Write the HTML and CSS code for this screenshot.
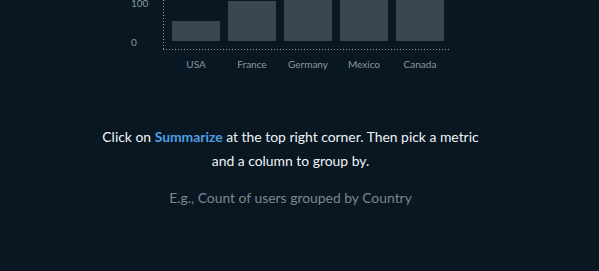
FILE: index.html
```html
<!DOCTYPE html>
<html lang="en">
  <head>
    <meta charset="utf-8">
    <meta name="viewport" content="width=device-width, initial-scale=1">
    <title>Summarize hint</title>
    <link rel="stylesheet" href="styles.css">
  </head>

  <body>
    <div class="empty-state">
      <svg class="chart" width="599" height="80" viewBox="0 0 599 80">
        <g class="axis-labels">
          <text x="131" y="7">100</text>
          <text x="131" y="46">0</text>
        </g>
        <g class="bars">
          <rect x="172" y="21" width="48" height="20"></rect>
          <rect x="228" y="1" width="48" height="40"></rect>
          <rect x="284" y="-10" width="48" height="51"></rect>
          <rect x="340" y="-10" width="48" height="51"></rect>
          <rect x="396" y="-10" width="48" height="51"></rect>
        </g>
        <g class="axis">
          <line x1="163.5" y1="0" x2="163.5" y2="49"></line>
          <line x1="163" y1="49.5" x2="449" y2="49.5"></line>
        </g>
        <g class="x-labels">
          <text x="196" y="68">USA</text>
          <text x="252" y="68">France</text>
          <text x="308" y="68">Germany</text>
          <text x="364" y="68">Mexico</text>
          <text x="420" y="68">Canada</text>
        </g>
      </svg>

      <div class="copy">
        <p class="hint">Click on <strong class="link">Summarize</strong> at the top right corner. Then pick a metric and a column to group by.</p>
        <p class="example">E.g., Count of users grouped by Country</p>
      </div>
    </div>
  </body>
</html>
```

FILE: styles.css
```css
html, body {
  margin: 0;
  background: #081722;
}
body {
  font-family: Lato, "Noto Sans", sans-serif;
  color: #ffffff;
}
.empty-state {
  display: flex;
  flex-direction: column;
  align-items: center;
}
.chart {
  display: block;
}
.chart .bars rect {
  fill: #3b464e;
}
.chart .axis line {
  stroke: #8d979e;
  stroke-width: 1;
  stroke-dasharray: 1 2;
}
.chart text {
  font-family: Lato, "Noto Sans", sans-serif;
  font-size: 10px;
  fill: #8d979e;
}
.chart .x-labels text {
  text-anchor: middle;
}
.copy {
  display: flex;
  flex-direction: column;
  align-items: center;
  margin-right: 18px;
}
.hint {
  width: 390px;
  margin: 45px 0 0;
  font-size: 13.9px;
  line-height: 24px;
  text-align: center;
  color: #f2f4f5;
}
.hint .link {
  color: #509ee3;
  font-weight: 700;
}
.example {
  margin: 13px 0 0;
  font-size: 13.9px;
  line-height: 24px;
  color: #7c868e;
}
```
